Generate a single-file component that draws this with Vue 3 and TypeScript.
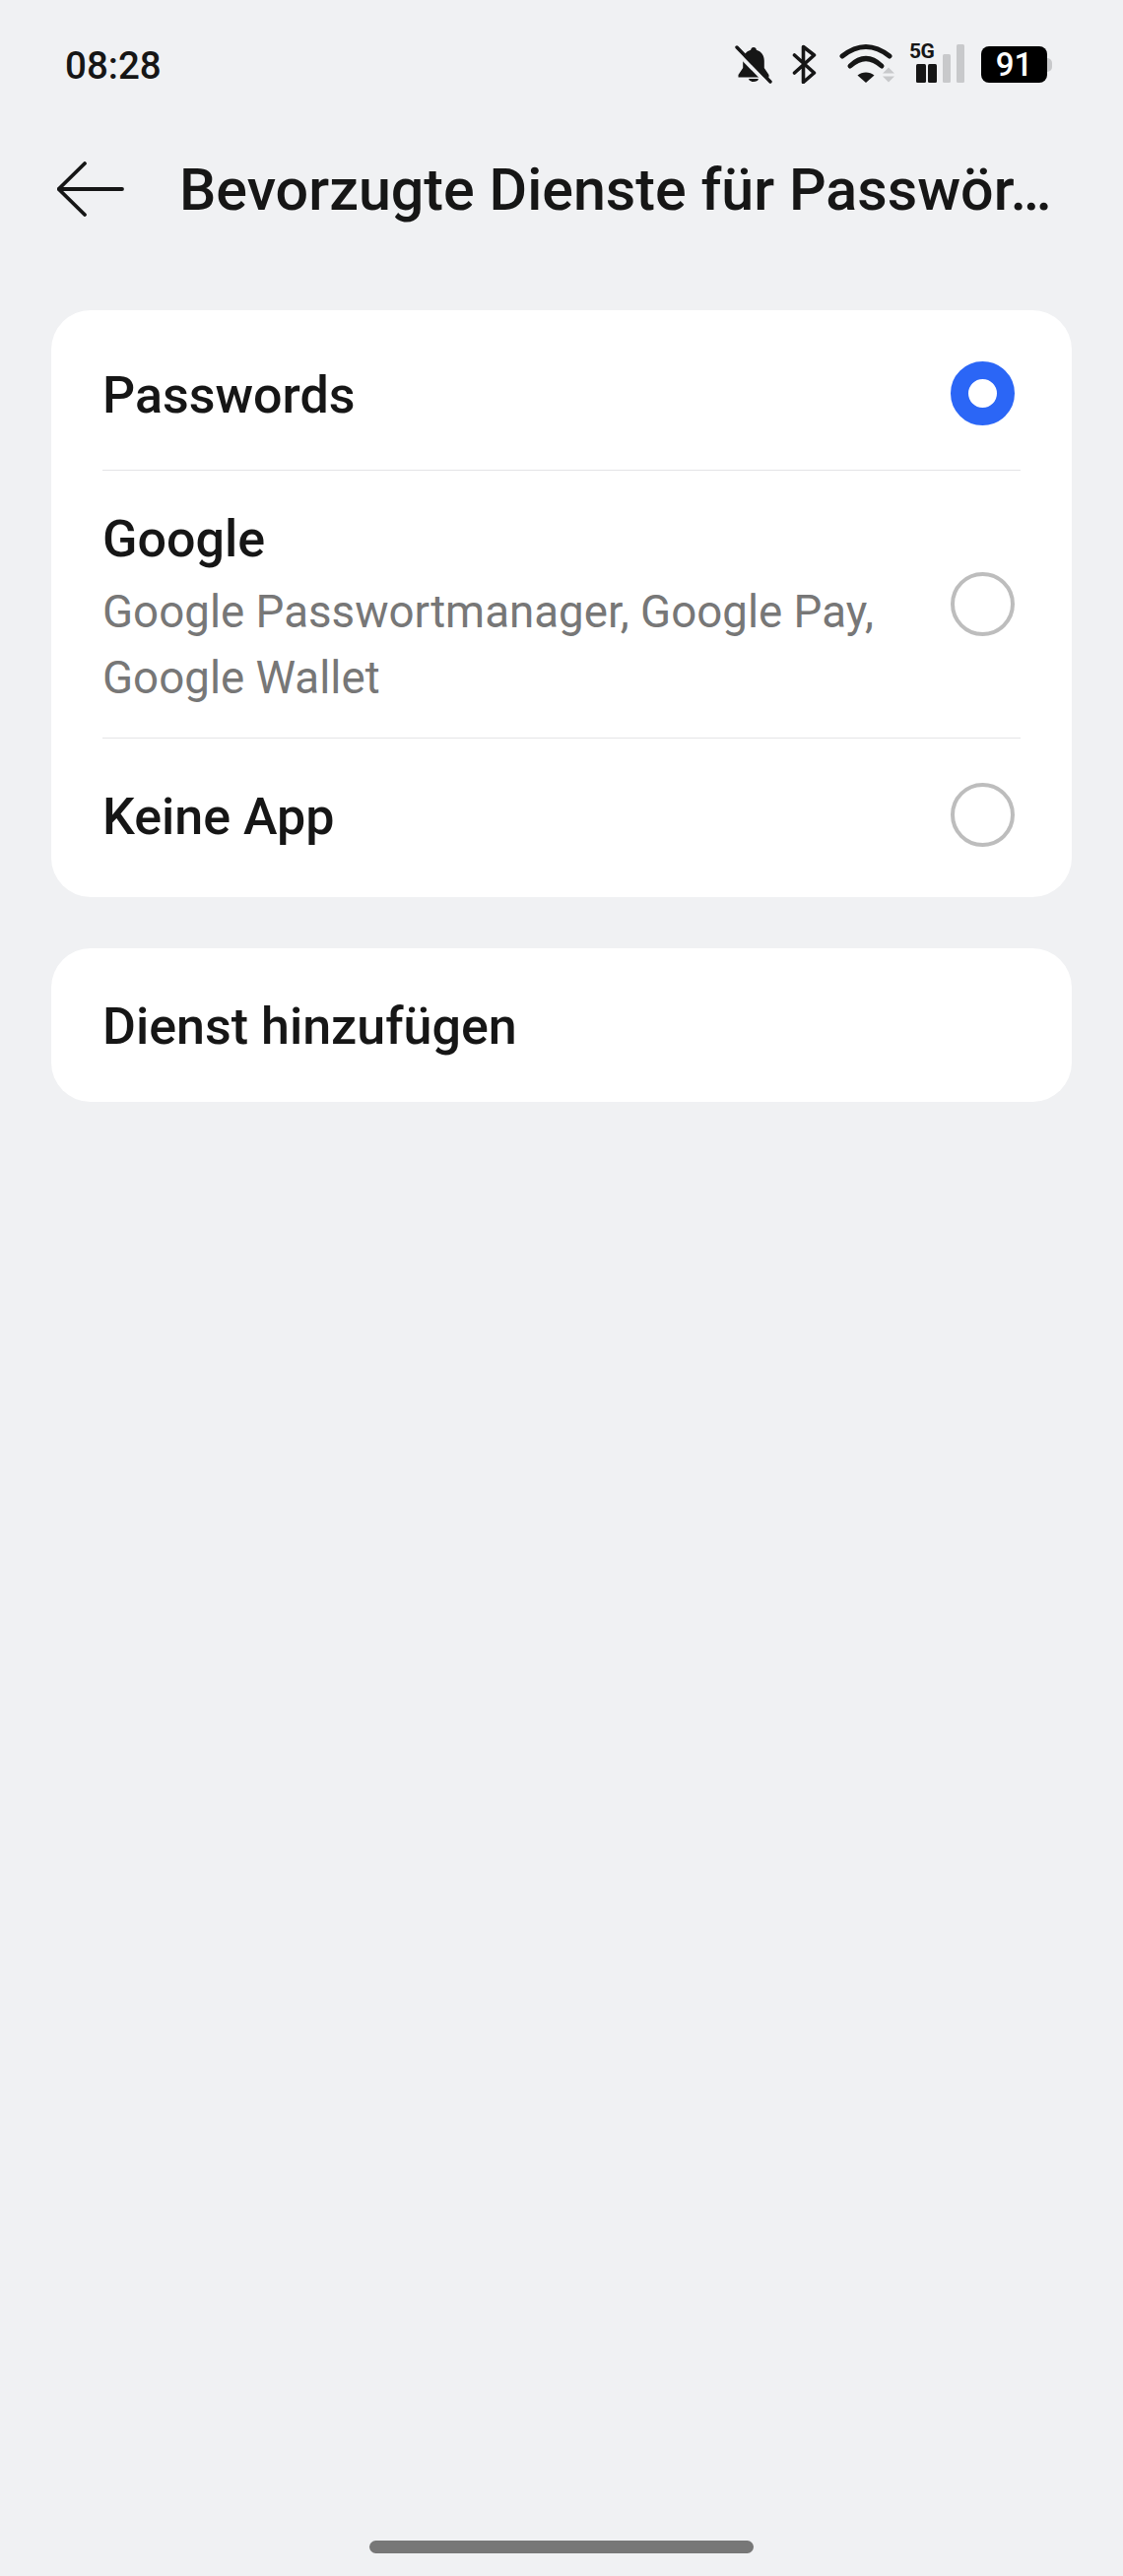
<script setup lang="ts">
interface Row { title: string; sub?: string[]; on?: boolean }
const rows: Row[] = [
  { title: 'Passwords', on: true },
  { title: 'Google', sub: ['Google Passwortmanager, Google Pay,', 'Google Wallet'] },
  { title: 'Keine App' },
]
</script>

<template>
  <div class="page">
    <div class="status">
      <span class="time">08:28</span>
      <div class="icons">
        <svg class="ic-bell" width="40" height="40" viewBox="0 0 40 40">
          <path d="M20 3c1.600 0 2.700 1 2.900 2.700 5 1.400 7.900 5.600 7.900 11v7.300l4.700 7v2.500h-31V31l4.700-7v-7.300c0-5.400 2.900-9.600 7.900-11C17.300 4 18.400 3 20 3z" fill="#161616" />
          <path d="M15 35h10c-.5 2-2.500 3-5 3s-4.500-1-5-3z" fill="#161616" />
          <path d="M-1 4L35 41" stroke="#f0f1f3" stroke-width="4" />
          <path d="M3 3l34 35" stroke="#161616" stroke-width="3.400" stroke-linecap="round" />
        </svg>
        <svg class="ic-bt" width="26" height="40" viewBox="0 0 26 40">
          <path d="M2.500 11l20 18-11 9.500V2.500l11 8.500-20 18" fill="none" stroke="#161616" stroke-width="3.600" stroke-linejoin="round" stroke-linecap="round" />
        </svg>
        <svg class="ic-wifi" width="58" height="42" viewBox="0 0 58 42">
          <path d="M3 13Q27-6 51 13" fill="none" stroke="#161616" stroke-width="5" stroke-linecap="round" />
          <path d="M11 23Q27 8 43 23" fill="none" stroke="#161616" stroke-width="5" stroke-linecap="round" />
          <path d="M27 40l-8.500-7.500c4.500-4 12.500-4 17 0z" fill="#161616" />
          <path d="M50 24.500l6 6H44zM44 33.500h12l-6 6z" fill="#c8c9cb" />
        </svg>
        <div class="signal">
          <span class="five">5G</span>
          <svg width="56" height="40" viewBox="0 0 56 40">
            <rect x="7" y="20" width="10" height="19" rx="1.500" fill="#161616" />
            <rect x="19" y="20" width="9" height="19" rx="1.500" fill="#161616" />
            <rect x="34" y="10" width="8" height="29" rx="1.500" fill="#c8c9cb" />
            <rect x="48" y="0" width="8" height="39" rx="1.500" fill="#c8c9cb" />
          </svg>
        </div>
        <div class="battery">
          <span class="level">91</span>
          <span class="cap"></span>
        </div>
      </div>
    </div>

    <header class="bar">
      <svg class="back" width="68" height="56" viewBox="0 0 68 56">
        <path d="M66 28H1.500M28 2L1.500 28 28 54" fill="none" stroke="#161616" stroke-width="3.800" stroke-linecap="round" stroke-linejoin="round" />
      </svg>
      <h1 class="title">Bevorzugte Dienste für Passwör…</h1>
    </header>

    <section class="card">
      <div v-for="row in rows" :key="row.title" class="row" :class="{ tall: row.sub }">
        <div class="copy">
          <div class="name">{{ row.title }}</div>
          <div v-for="line in row.sub" :key="line" class="sub">{{ line }}</div>
        </div>
        <span class="radio" :class="{ on: row.on }"></span>
      </div>
    </section>

    <section class="card add">
      <div class="name">Dienst hinzufügen</div>
    </section>

    <div class="spacer"></div>
    <div class="home"></div>
  </div>
</template>

<style>
html, body { margin: 0; background: #f0f1f3; }
</style>

<style scoped>
.page {
  width: 1140px;
  height: 2616px;
  box-sizing: border-box;
  background: #f0f1f3;
  display: flex;
  flex-direction: column;
  font-family: Roboto, "Liberation Sans", sans-serif;
  color: #161616;
}
.status {
  height: 64px;
  margin-top: 33px;
  padding: 0 77px 0 66px;
  display: flex;
  align-items: center;
  justify-content: space-between;
}
.time { font-size: 38.5px; font-weight: 500; position: relative; top: 1px; }
.icons { display: flex; align-items: center; }
.ic-bell { margin-right: 19px; }
.ic-bt { margin-right: 22px; }
.ic-wifi { margin-right: 13px; }
.signal { position: relative; width: 56px; height: 40px; margin-right: 17px; }
.five {
  position: absolute;
  left: 0;
  top: -3px;
  font-size: 21px;
  line-height: 20px;
  font-weight: 700;
  letter-spacing: -0.5px;
}
.battery {
  position: relative;
  width: 67px;
  height: 37px;
  border-radius: 8px;
  background: #000;
  color: #fff;
  display: flex;
  align-items: center;
  justify-content: center;
  font-size: 33px;
  font-weight: 500;
}
.cap {
  position: absolute;
  right: -5px;
  top: 12px;
  width: 5px;
  height: 14px;
  border-radius: 0 5px 5px 0;
  background: #c8c9cb;
}
.bar {
  height: 56px;
  margin-top: 67px;
  padding-left: 58px;
  display: flex;
  align-items: center;
}
.title {
  margin: 0 0 0 56px;
  font-size: 59.2px;
  font-weight: 500;
  white-space: nowrap;
}
.card {
  margin: 95px 52px 0;
  background: #fff;
  border-radius: 40px;
  padding: 0 52px;
}
.row {
  display: flex;
  align-items: center;
  justify-content: space-between;
  height: 163px;
  box-sizing: border-box;
  border-bottom: 1px solid #e4e4e6;
  padding-right: 6px;
  padding-top: 6px;
}
.copy { margin-top: 5px; }
.row.tall { height: 272px; padding-top: 0; }
.row.tall .copy { margin-top: 12px; }
.row:last-child { height: 161px; border-bottom: 0; padding-top: 0; padding-bottom: 6px; }
.name { font-size: 52px; font-weight: 500; line-height: 60px; }
.sub { font-size: 45.7px; line-height: 67px; color: #777; }
.row.tall .name { margin-bottom: 10px; }
.radio {
  width: 65px;
  height: 65px;
  box-sizing: border-box;
  border: 4px solid #bdbdbd;
  border-radius: 50%;
  flex: none;
}
.radio.on { border: 18px solid #2b66f6; }
.add {
  margin-top: 52px;
  height: 156px;
  display: flex;
  align-items: center;
}
.add .name { margin-top: 4px; }
.spacer { flex: 1; }
.home {
  align-self: center;
  width: 390px;
  height: 13px;
  border-radius: 7px;
  background: #777;
  margin-bottom: 23px;
}
</style>
